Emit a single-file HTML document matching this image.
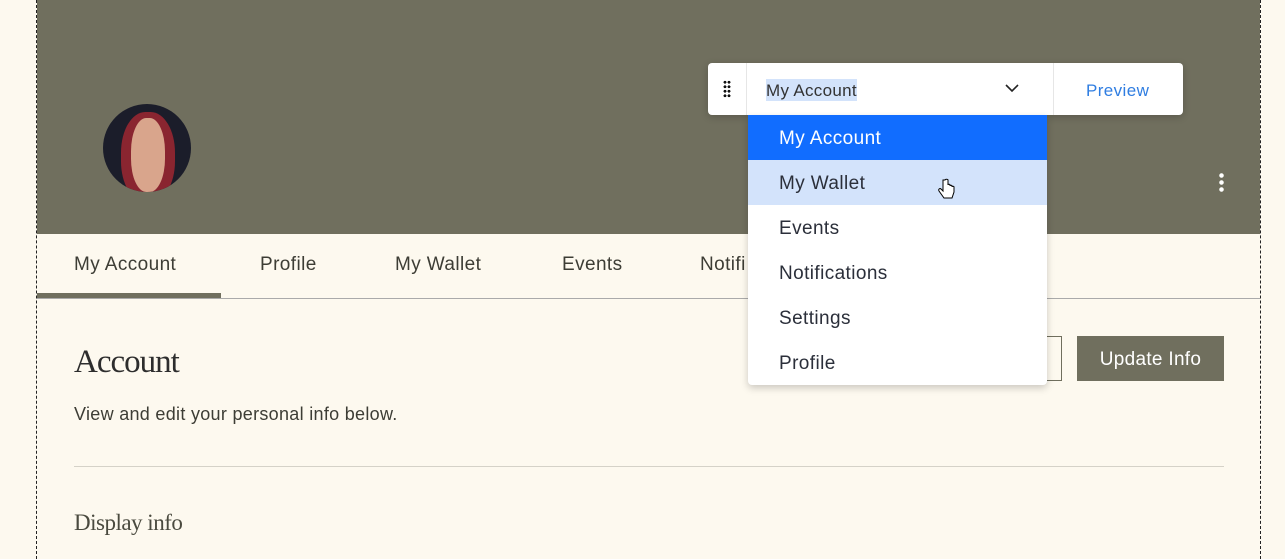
<!DOCTYPE html>
<html><head><style>
*{margin:0;padding:0;box-sizing:border-box}
body{width:1285px;height:559px;background:#fdf9ef;position:relative;overflow:hidden;font-family:"Liberation Sans",sans-serif;color:#3a3a3a}
.abs{position:absolute}
.dash{position:absolute;top:0;bottom:0;border-left:1px dashed #222}
.tab{position:absolute;top:254px;font-size:19px;color:#3d3d35;letter-spacing:0.4px}
.dd div{height:45px;line-height:47px;padding-left:31px;font-size:19px;color:#2b2f3a;letter-spacing:0.4px}
</style></head><body>
<div class="abs" style="left:37px;top:0;width:1223px;height:234px;background:#706f5e"></div>
<div class="dash" style="left:36px"></div>
<div class="dash" style="left:1260px"></div>
<div class="abs" style="left:103px;top:104px;width:88px;height:88px;border-radius:50%;overflow:hidden;background:#1b1d2a">
 <div class="abs" style="left:18px;top:8px;width:54px;height:90px;border-radius:45%;background:#8a2530"></div>
 <div class="abs" style="left:28px;top:14px;width:34px;height:74px;border-radius:45%;background:#d9a58c"></div>
</div>
<div class="abs" style="left:1219px;top:172px;width:5px;height:20px;background:radial-gradient(circle,#fff 2px,transparent 2.5px) 0 0/5px 7px"></div>
<div class="tab" style="left:74px">My Account</div>
<div class="tab" style="left:260px">Profile</div>
<div class="tab" style="left:395px">My Wallet</div>
<div class="tab" style="left:562px">Events</div>
<div class="tab" style="left:700px">Notifi</div>
<div class="abs" style="left:37px;top:298px;width:1223px;height:1px;background:#aaa"></div>
<div class="abs" style="left:37px;top:293px;width:184px;height:5px;background:#706f5e"></div>
<div class="abs" style="left:74px;top:344px;font-family:'Liberation Serif',serif;font-size:33px;color:#2d2d2d;letter-spacing:-1px">Account</div>
<div class="abs" style="left:74px;top:404px;font-size:18px;color:#3d3d35;letter-spacing:0.3px">View and edit your personal info below.</div>
<div class="abs" style="left:74px;top:466px;width:1150px;height:1px;background:#d5d2c8"></div>
<div class="abs" style="left:74px;top:510px;font-family:'Liberation Serif',serif;font-size:23px;color:#4a4a3f;letter-spacing:-0.5px">Display info</div>
<div class="abs" style="left:1000px;top:336px;width:62px;height:45px;border:1px solid #706f5e"></div>
<div class="abs" style="left:1077px;top:336px;width:147px;height:45px;background:#706f5e;color:#fff;font-size:19px;line-height:47px;text-align:center;letter-spacing:0.3px">Update Info</div>
<div class="abs" style="left:708px;top:63px;width:475px;height:52px;background:#fff;border-radius:4px;box-shadow:0 2px 8px rgba(0,0,0,.2)">
 <div class="abs" style="left:15px;top:17px;width:8px;height:18px;background:radial-gradient(circle,#111 1.3px,transparent 1.6px) 0 0/4px 4.5px"></div>
 <div class="abs" style="left:38px;top:0;width:1px;height:52px;background:#e6e6e6"></div>
 <div class="abs" style="left:345px;top:0;width:1px;height:52px;background:#e6e6e6"></div>
 <div class="abs" style="left:58px;top:16px;background:#d3e3fb;font-size:17px;color:#333;padding:1px 0;height:22px;line-height:22px;letter-spacing:0.3px">My Account</div>
 <svg class="abs" style="left:297px;top:20px" width="14" height="10"><path d="M1 2l6 6 6-6" fill="none" stroke="#222" stroke-width="1.6"/></svg>
 <div class="abs" style="left:378px;top:18px;font-size:17px;color:#2f7de1;letter-spacing:0.4px">Preview</div>
</div>
<div class="abs dd" style="left:748px;top:115px;width:299px;height:270px;background:#fff;border-radius:0 0 4px 4px;box-shadow:0 3px 8px rgba(0,0,0,.2);overflow:hidden">
 <div style="background:#116dff;color:#fff">My Account</div>
 <div style="background:#d3e3fb">My Wallet</div>
 <div>Events</div><div>Notifications</div><div>Settings</div><div>Profile</div>
</div>
<svg class="abs" style="left:938px;top:178px" width="18" height="24"><path d="M5 2v11l-2-2c-1-1-3 0-2 2l5 7h8l2-6v-5c0-1-2-1-2 0v-1c0-1-2-1-2 0v-1c0-1-2-1-2 0V2c0-1-3-1-3 0z" fill="#fff" stroke="#000" stroke-width="1"/></svg>
</body></html>
